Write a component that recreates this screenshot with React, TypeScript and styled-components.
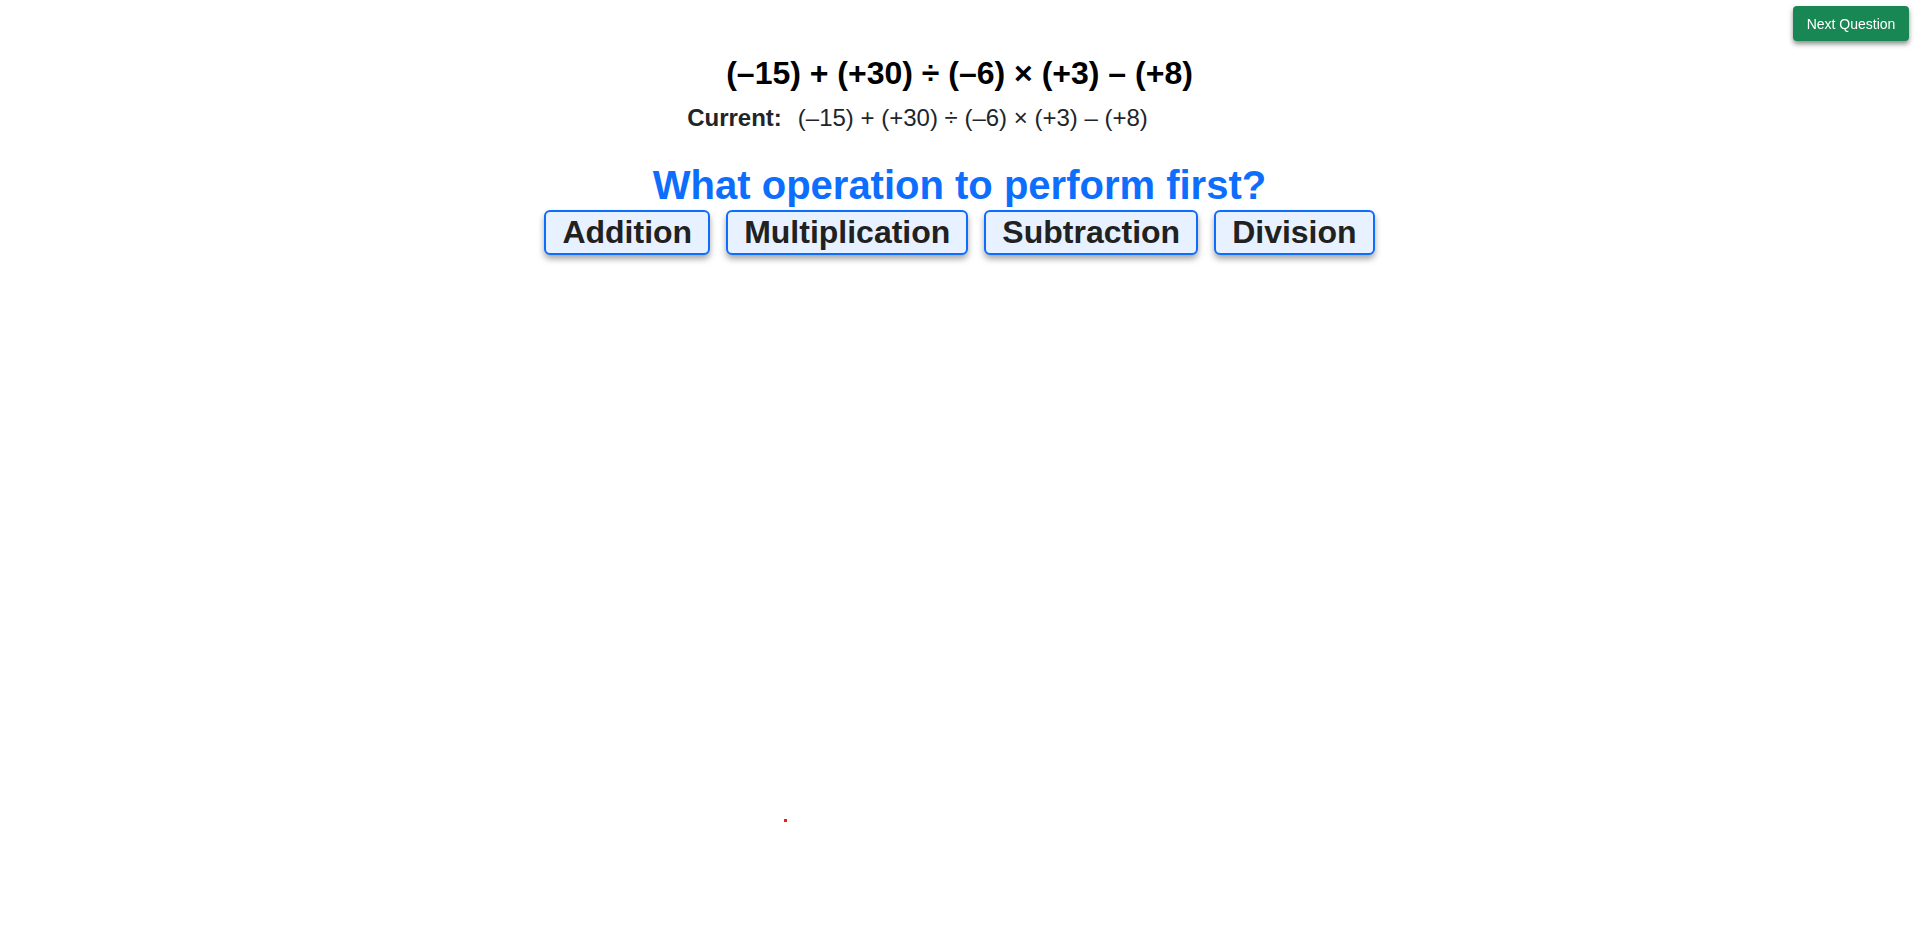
import React from "react";
import styled, { createGlobalStyle } from "styled-components";

const GlobalStyle = createGlobalStyle`
  html, body {
    margin: 0;
    padding: 0;
    background: #ffffff;
    font-family: "Liberation Sans", Arial, sans-serif;
  }
  * { box-sizing: border-box; }
`;

const Page = styled.main`
  position: relative;
  width: 100%;
  min-height: 935px;
  display: flex;
  flex-direction: column;
  align-items: center;
  padding-top: 55px;
`;

const NextButton = styled.button`
  position: fixed;
  top: 6px;
  right: 10px;
  width: 116px;
  height: 35px;
  padding: 0;
  border: none;
  border-radius: 4px;
  background: #198754;
  color: #ffffff;
  font-family: "Liberation Sans", Arial, sans-serif;
  font-size: 14px;
  box-shadow: 0 3px 5px rgba(0, 0, 0, 0.45);
  cursor: pointer;
`;

const Expression = styled.h1`
  margin: 0;
  font-size: 32px;
  font-weight: 700;
  line-height: 37px;
  color: #000000;
  text-align: center;
`;

const CurrentRow = styled.div`
  margin-top: 12px;
  display: flex;
  align-items: baseline;
  justify-content: center;
  gap: 16px;
  padding-right: 84px;
  font-size: 24px;
  line-height: 28px;
  color: #212529;
`;

const CurrentLabel = styled.span`
  font-weight: 700;
`;

const CurrentValue = styled.span`
  font-weight: 400;
`;

const Question = styled.h2`
  margin: 30px 0 0;
  font-size: 40px;
  font-weight: 700;
  line-height: 46px;
  color: #0d6efd;
  text-align: center;
`;

const Choices = styled.div`
  margin-top: 2px;
  display: flex;
  justify-content: center;
  gap: 16px;
`;

const ChoiceButton = styled.button`
  height: 45px;
  padding: 0 16px;
  border: 2px solid #0d6efd;
  border-radius: 6px;
  background: #e7f1ff;
  color: #212121;
  font-family: "Liberation Sans", Arial, sans-serif;
  font-size: 32px;
  font-weight: 700;
  line-height: 39px;
  box-shadow: 0 4px 6px rgba(0, 0, 0, 0.35);
  cursor: pointer;
`;

const Dot = styled.span`
  position: absolute;
  left: 784px;
  top: 819px;
  width: 3px;
  height: 3px;
  background: #ee1c1c;
`;

const options = ["Addition", "Multiplication", "Subtraction", "Division"];

export default function App() {
  return (
    <>
      <GlobalStyle />
      <Page>
        <NextButton>Next Question</NextButton>
        <Expression>(–15) + (+30) ÷ (–6) × (+3) – (+8)</Expression>
        <CurrentRow>
          <CurrentLabel>Current:</CurrentLabel>
          <CurrentValue>(–15) + (+30) ÷ (–6) × (+3) – (+8)</CurrentValue>
        </CurrentRow>
        <Question>What operation to perform first?</Question>
        <Choices>
          {options.map((o) => (
            <ChoiceButton key={o}>{o}</ChoiceButton>
          ))}
        </Choices>
        <Dot />
      </Page>
    </>
  );
}
